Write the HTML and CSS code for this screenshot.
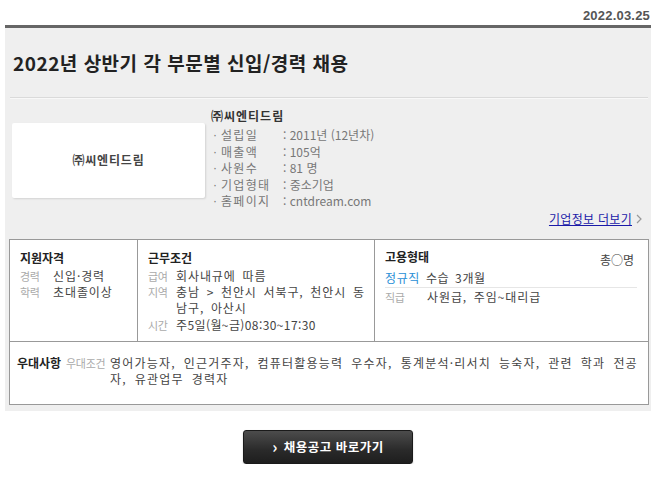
FILE: index.html
```html
<!DOCTYPE html>
<html lang="ko">
<head>
<meta charset="utf-8">
<title>채용공고</title>
<link rel="stylesheet" href="styles.css">
</head>
<body>
<div class="date">2022.03.25</div>
<div class="panel">
  <h1 class="title">2022년 상반기 각 부문별 신입/경력 채용</h1>
  <div class="sep"></div>
  <div class="company">
    <div class="logo-box">㈜씨엔티드림</div>
    <div class="info">
      <div class="cname">㈜씨엔티드림</div>
      <ul class="facts">
        <li><span class="dot">·</span><span class="fl">설립일</span><span class="fv">: 2011년 (12년차)</span></li>
        <li><span class="dot">·</span><span class="fl">매출액</span><span class="fv">: 105억</span></li>
        <li><span class="dot">·</span><span class="fl">사원수</span><span class="fv">: 81 명</span></li>
        <li><span class="dot">·</span><span class="fl">기업형태</span><span class="fv">: 중소기업</span></li>
        <li><span class="dot">·</span><span class="fl">홈페이지</span><span class="fv">: cntdream.com</span></li>
      </ul>
    </div>
  </div>
  <div class="more-row">
    <a class="more" href="#">기업정보 더보기</a>
    <svg class="more-arrow" width="8" height="10" viewBox="0 0 8 10"><path d="M2 1l4 4-4 4" fill="none" stroke="#999" stroke-width="1.2"/></svg>
  </div>
  <div class="table">
    <div class="cell c1">
      <div class="th">지원자격</div>
      <div class="row"><span class="lb w33">경력</span><span class="val">신입·경력</span></div>
      <div class="row"><span class="lb w33">학력</span><span class="val">초대졸이상</span></div>
    </div>
    <div class="cell c2">
      <div class="th">근무조건</div>
      <div class="row"><span class="lb w28">급여</span><span class="val">회사내규에 따름</span></div>
      <div class="row"><span class="lb w28">지역</span><span class="val">충남 &gt; 천안시 서북구, 천안시 동남구, 아산시</span></div>
      <div class="row"><span class="lb w28">시간</span><span class="val num">주5일(월~금)08:30~17:30</span></div>
    </div>
    <div class="cell c3">
      <div class="th-row"><span class="th">고용형태</span><span class="total">총○명</span></div>
      <div class="emp"><span class="blue">정규직</span> 수습 3개월</div>
      <div class="row rank"><span class="lb small w42">직급</span><span class="val">사원급, 주임~대리급</span></div>
    </div>
    <div class="cell c4">
      <span class="th w49">우대사항</span>
      <span class="lb w44">우대조건</span>
      <span class="val pref">영어가능자, 인근거주자, 컴퓨터활용능력 우수자, 통계분석·리서치 능숙자, 관련 학과 전공자, 유관업무 경력자</span>
    </div>
  </div>
</div>
<div class="btn-wrap">
  <a class="btn" href="#"><span class="chev">›</span>채용공고 바로가기</a>
</div>
</body>
</html>
```

FILE: styles.css
```css
* { box-sizing: border-box; }
body {
  margin: 0;
  background: #fff;
  font-family: "Noto Sans CJK KR", "Noto Sans", sans-serif;
  font-size: 12px;
  color: #333;
}
.date {
  height: 25px;
  padding: 9px 9px 0 0;
  text-align: right;
  font-family: "Liberation Sans", "Noto Sans CJK KR", sans-serif;
  font-weight: bold;
  font-size: 13px;
  line-height: 13px;
  color: #555;
  letter-spacing: 0.2px;
}
.panel {
  margin-left: 5px;
  width: 646px;
  background: #efefef;
  border-top: 3px solid #666;
  padding-bottom: 6px;
}
.title {
  margin: 0;
  padding-left: 8px;
  height: 69px;
  line-height: 70px;
  font-size: 19px;
  font-weight: bold;
  color: #222;
  letter-spacing: 0.5px;
}
.sep {
  margin: 0 3px 0 5px;
  border-top: 1px solid #dadada;
  border-bottom: 1px solid #f8f8f8;
}
.company {
  display: flex;
  align-items: flex-start;
  padding: 9px 0 0 7px;
}
.logo-box {
  margin-top: 15px;
  width: 193px;
  height: 75px;
  background: #fff;
  border-radius: 2px;
  box-shadow: 1px 1px 2px rgba(0,0,0,0.12);
  display: flex;
  align-items: center;
  justify-content: center;
  font-weight: bold;
  font-size: 12px;
  letter-spacing: 0.8px;
  color: #444;
  padding-bottom: 2px;
}
.info { margin-left: 6px; }
.cname {
  line-height: 16px;
  font-weight: bold;
  color: #333;
  letter-spacing: 1px;
}
.facts {
  list-style: none;
  margin: 3px 0 0 0;
  padding: 0;
  color: #777;
  font-size: 12px;
}
.facts li {
  display: flex;
  line-height: 16.5px;
}
.dot {
  width: 10px;
  padding-left: 2px;
  font-family: "Liberation Sans", sans-serif;
}
.fl { width: 62px; letter-spacing: 1.3px; }
.fv { letter-spacing: 0; }
.more-row {
  display: flex;
  justify-content: flex-end;
  align-items: center;
  height: 16px;
  padding-right: 8px;
  margin-top: 1px;
}
.more {
  color: #1a1aa8;
  text-decoration: underline;
  line-height: 16px;
  letter-spacing: 0.3px;
}
.more-arrow { margin-left: 3px; }
.table {
  margin: 12px 0 0 4px;
  width: 640px;
  border: 1px solid #999;
  background: #fff;
  display: grid;
  grid-template-columns: 128px 237px 1fr;
  color: #444;
}
.cell {
  border-bottom: 1px solid #999;
  border-right: 1px solid #999;
  height: 102px;
  padding: 10px 10px 0 10px;
}
.c2 { padding-right: 5px; }
.c3 { border-right: none; padding-right: 11px; padding-top: 9px; }
.c4 {
  grid-column: 1 / 4;
  border: none;
  height: 62px;
  padding: 13px 10px 0 7px;
  display: flex;
  align-items: flex-start;
}
.th {
  font-weight: bold;
  color: #222;
  line-height: 16px;
  font-size: 12px;
}
.row {
  display: flex;
  line-height: 16.4px;
}
.c1 .th, .c2 .th { margin-bottom: 2px; }
.lb {
  color: #aaa;
  flex: none;
  font-size: 11px;
  letter-spacing: -0.3px;
}
.w33 { width: 33px; }
.w28 { width: 28px; }
.w42 { width: 42px; }
.w44 { width: 44px; line-height: 16.4px; }
.w49 { width: 49px; }
.val { letter-spacing: 0.9px; word-spacing: 2.5px; }
.val.num { letter-spacing: 0.4px; }
.th-row {
  display: flex;
  justify-content: space-between;
  align-items: flex-start;
}
.total {
  margin-top: 3px;
  margin-right: 3px;
  line-height: 16px;
  color: #444;
}
.emp {
  margin-top: 2px;
  line-height: 16px;
  padding-bottom: 1px;
  border-bottom: 1px solid #e6e6e6;
  letter-spacing: 0.6px;
  word-spacing: 2px;
}
.blue { color: #2a8fd6; }
.rank { margin-top: 1px; }
.c4 .th { line-height: 16.4px; }
.pref {
  flex: 1;
  line-height: 16.4px;
  letter-spacing: 1.2px;
  word-spacing: 3.5px;
}
.btn-wrap {
  width: 646px;
  margin: 19px 0 0 5px;
  display: flex;
  justify-content: center;
}
.btn {
  width: 170px;
  height: 34px;
  display: flex;
  align-items: center;
  justify-content: center;
  background: linear-gradient(#4c4c4c, #2a2a2a 60%, #1e1e1e);
  border: 1px solid #1a1a1a;
  border-radius: 3px;
  color: #fff;
  font-weight: bold;
  font-size: 12.5px;
  text-decoration: none;
  letter-spacing: 0.5px;
  box-shadow: 0 1px 2px rgba(0,0,0,0.2);
}
.chev {
  font-size: 16px;
  font-weight: bold;
  margin-right: 6px;
  line-height: 12px;
  position: relative;
  top: -1px;
}
```
